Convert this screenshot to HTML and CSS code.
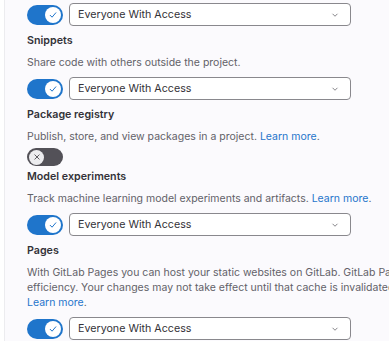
FILE: index.html
```html
<!DOCTYPE html>
<html>
<head>
<meta charset="utf-8">
<link rel="stylesheet" href="styles.css">
</head>
<body>
<div class="page">
  <div class="rail"></div>
  <div class="content">
    <div class="ctrl-row">
      <span class="toggle on"><span class="knob"><svg viewBox="0 0 16 16" width="10" height="10"><path d="M3.5 8.5l3 3 6-7" fill="none" stroke="#1f75cb" stroke-width="1.6" stroke-linecap="round" stroke-linejoin="round"/></svg></span></span>
      <div class="select"><span>Everyone With Access</span><svg class="chev" viewBox="0 0 16 16" width="10" height="10"><path d="M4.5 6.5L8 10l3.5-3.5" fill="none" stroke="#737278" stroke-width="1.4" stroke-linecap="round" stroke-linejoin="round"/></svg></div>
    </div>
    <div class="setting">
      <div class="title">Snippets</div>
      <div class="desc">Share code with others outside the project.</div>
      <div class="ctrl-row">
        <span class="toggle on"><span class="knob"><svg viewBox="0 0 16 16" width="10" height="10"><path d="M3.5 8.5l3 3 6-7" fill="none" stroke="#1f75cb" stroke-width="1.6" stroke-linecap="round" stroke-linejoin="round"/></svg></span></span>
        <div class="select"><span>Everyone With Access</span><svg class="chev" viewBox="0 0 16 16" width="10" height="10"><path d="M4.5 6.5L8 10l3.5-3.5" fill="none" stroke="#737278" stroke-width="1.4" stroke-linecap="round" stroke-linejoin="round"/></svg></div>
      </div>
    </div>
    <div class="setting">
      <div class="title">Package registry</div>
      <div class="desc">Publish, store, and view packages in a project. <a class="link">Learn more</a>.</div>
      <div class="ctrl-row off-row">
        <span class="toggle off"><span class="knob"><svg viewBox="0 0 16 16" width="10" height="10"><path d="M4.5 4.5l7 7M11.5 4.5l-7 7" fill="none" stroke="#535158" stroke-width="1.5" stroke-linecap="round"/></svg></span></span>
      </div>
    </div>
    <div class="setting">
      <div class="title">Model experiments</div>
      <div class="desc">Track machine learning model experiments and artifacts. <a class="link">Learn more</a>.</div>
      <div class="ctrl-row">
        <span class="toggle on"><span class="knob"><svg viewBox="0 0 16 16" width="10" height="10"><path d="M3.5 8.5l3 3 6-7" fill="none" stroke="#1f75cb" stroke-width="1.6" stroke-linecap="round" stroke-linejoin="round"/></svg></span></span>
        <div class="select"><span>Everyone With Access</span><svg class="chev" viewBox="0 0 16 16" width="10" height="10"><path d="M4.5 6.5L8 10l3.5-3.5" fill="none" stroke="#737278" stroke-width="1.4" stroke-linecap="round" stroke-linejoin="round"/></svg></div>
      </div>
    </div>
    <div class="setting">
      <div class="title">Pages</div>
      <div class="desc wide">With GitLab Pages you can host your static websites on GitLab. GitLab Pages uses a caching mechanism for<br>efficiency. Your changes may not take effect until that cache is invalidated, which usually takes less than a minute.<br><a class="link">Learn more</a>.</div>
      <div class="ctrl-row">
        <span class="toggle on"><span class="knob"><svg viewBox="0 0 16 16" width="10" height="10"><path d="M3.5 8.5l3 3 6-7" fill="none" stroke="#1f75cb" stroke-width="1.6" stroke-linecap="round" stroke-linejoin="round"/></svg></span></span>
        <div class="select"><span>Everyone With Access</span><svg class="chev" viewBox="0 0 16 16" width="10" height="10"><path d="M4.5 6.5L8 10l3.5-3.5" fill="none" stroke="#737278" stroke-width="1.4" stroke-linecap="round" stroke-linejoin="round"/></svg></div>
      </div>
    </div>
  </div>
</div>
</body>
</html>
```
FILE: styles.css
```css
html, body {
  margin: 0;
  padding: 0;
  background: #fbfafd;
  overflow: hidden;
}
body {
  font-family: Inter, "Noto Sans", sans-serif;
  font-size: 10.7px;
  color: #333238;
}
.page {
  display: flex;
  height: 341px;
  overflow: hidden;
}
.rail {
  width: 4px;
  background: #ffffff;
  border-right: 1px solid #ececef;
  flex: none;
}
.content {
  flex: 1;
  padding: 3px 0 0 22px;
  min-width: 0;
}
.ctrl-row {
  display: flex;
  align-items: center;
  gap: 6px;
  height: 23px;
}
.ctrl-row.off-row {
  height: 18px;
  margin-top: -3px;
  margin-bottom: -4px;
}
.toggle {
  width: 36px;
  height: 20px;
  border-radius: 10px;
  display: flex;
  align-items: center;
  padding: 0 2px;
  box-sizing: border-box;
  flex: none;
}
.toggle.on {
  background: #1f75cb;
  justify-content: flex-end;
}
.toggle.off {
  background: #535158;
  justify-content: flex-start;
  height: 18px;
}
.knob {
  width: 16px;
  height: 16px;
  border-radius: 50%;
  background: #fff;
  display: flex;
  align-items: center;
  justify-content: center;
}
.toggle.off .knob {
  width: 15px;
  height: 15px;
  background: #ececef;
}
.select {
  width: 282px;
  height: 23px;
  box-sizing: border-box;
  border: 1px solid #89888d;
  border-radius: 4px;
  background: #fff;
  display: flex;
  align-items: center;
  justify-content: space-between;
  padding: 0 10px 0 8px;
  color: #333238;
  flex: none;
}
.setting {
  padding-top: 7px;
}
.title {
  font-weight: 600;
  line-height: 16px;
}
.desc {
  color: #626168;
  font-size: 10.5px;
  line-height: 15px;
  margin: 6px 0 7px;
}
.desc.wide {
  white-space: nowrap;
}
.link {
  color: #1f75cb;
}
```
